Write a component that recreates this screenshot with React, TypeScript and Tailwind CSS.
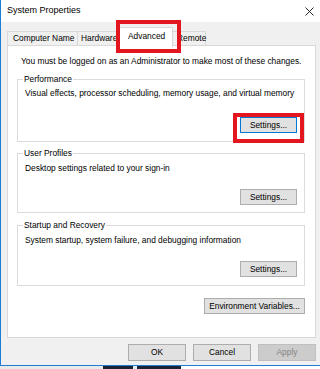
import React from 'react';

const font = { fontFamily: '"Liberation Sans", Arial, sans-serif' };

const Btn = ({ label, focused = false, disabled = false, className = '' }: { label: string; focused?: boolean; disabled?: boolean; className?: string }) => (
  <div
    className={`flex items-center justify-center border text-[8.4px] leading-none ${
      disabled
        ? 'bg-[#cccccc] border-[#bfbfbf] text-[#838383]'
        : focused
          ? 'bg-[#e1e1e1] border-[#0078d7] text-black'
          : 'bg-[#e1e1e1] border-[#adadad] text-black'
    } ${className}`}
  >
    {label}
  </div>
);

export default function App() {
  return (
    <div className="relative w-[320px] h-[369px] bg-white overflow-hidden" style={font}>
      <div className="h-[366px] border-l border-b border-[#1a7fd4] bg-[#f0f0f0] flex flex-col">
        {/* title bar */}
        <div className="h-[22px] bg-white flex items-center justify-between pl-[6px] pr-[6px]">
          <span className="text-[9px] text-black">System Properties</span>
          <svg width="9" height="9" viewBox="0 0 9 9">
            <path d="M0.5 0.5 L8.5 8.5 M8.5 0.5 L0.5 8.5" stroke="#111" strokeWidth="0.9" />
          </svg>
        </div>

        <div className="flex-1 pl-[6px] pr-[4px] flex flex-col">
          {/* tabs */}
          <div className="h-[23px] flex items-end text-[8.4px] text-black">
            <div className="w-[71px] h-[14px] border border-b-0 border-[#d9d9d9] bg-[#f0f0f0] pl-[5px] leading-[13px]">Computer Name</div>
            <div className="w-[43px] h-[14px] -ml-px border border-b-0 border-[#d9d9d9] bg-[#f0f0f0] pl-[3px] leading-[13px]">Hardware</div>
            <div className="relative z-10 w-[56px] h-[20px] -ml-[3px] -mb-[2px] border border-b-0 border-[#d9d9d9] bg-white pl-[10px] leading-[17px]">Advanced</div>
            <div className="w-[36px] h-[14px] -ml-[3px] border border-b-0 border-[#d9d9d9] bg-[#f0f0f0] pl-[6px] leading-[13px]">Remote</div>
          </div>

          {/* panel */}
          <div className="h-[293px] border border-[#d9d9d9] bg-white pt-[10px] pl-[9px] pr-[10px] flex flex-col text-[8.4px] leading-[11px] text-black">
            <div className="ml-[4px] whitespace-nowrap">You must be logged on as an Administrator to make most of these changes.</div>

            <fieldset className="mt-[7px] border border-[#dcdcdc] pl-[5px] pr-[7px] pb-[8px]">
              <legend className="px-[1px]">Performance</legend>
              <div className="ml-[2px] mt-[3px] whitespace-nowrap">Visual effects, processor scheduling, memory usage, and virtual memory</div>
              <div className="flex justify-end mt-[18px]">
                <Btn label="Settings..." focused className="w-[57px] h-[16px]" />
              </div>
            </fieldset>

            <fieldset className="mt-[6px] border border-[#dcdcdc] pl-[5px] pr-[7px] pb-[7px]">
              <legend className="px-[1px]">User Profiles</legend>
              <div className="ml-[2px] mt-[4px]">Desktop settings related to your sign-in</div>
              <div className="flex justify-end mt-[15px]">
                <Btn label="Settings..." className="w-[57px] h-[16px]" />
              </div>
            </fieldset>

            <fieldset className="mt-[7px] border border-[#dcdcdc] pl-[5px] pr-[7px] pb-[8px]">
              <legend className="px-[1px]">Startup and Recovery</legend>
              <div className="ml-[2px] mt-[4px]">System startup, system failure, and debugging information</div>
              <div className="flex justify-end mt-[15px]">
                <Btn label="Settings..." className="w-[57px] h-[16px]" />
              </div>
            </fieldset>

            <div className="flex justify-end mt-[12px]">
              <Btn label="Environment Variables..." className="w-[101px] h-[16px]" />
            </div>
          </div>

          {/* dialog buttons */}
          <div className="mt-[6px] flex justify-end gap-[7px]">
            <Btn label="OK" className="w-[58px] h-[17px]" />
            <Btn label="Cancel" className="w-[58px] h-[17px]" />
            <Btn label="Apply" disabled className="w-[58px] h-[17px]" />
          </div>
        </div>
      </div>

      {/* desktop strip below the window */}
      <div className="h-[3px] flex">
        <div className="w-[103px] bg-[#e9e9e9]" />
        <div className="w-[30px] bg-[#1c2233]" />
        <div className="w-[4px] bg-[#e9e9e9]" />
        <div className="w-[44px] bg-[#1c2233]" />
        <div className="flex-1 bg-white" />
      </div>

      {/* red annotation boxes */}
      <div className="absolute left-[116px] top-[20px] w-[65px] h-[33px] border-[4px] border-[#e3151f] z-20" />
      <div className="absolute left-[233px] top-[113px] w-[71px] h-[30px] border-[4px] border-[#e3151f] z-20" />
    </div>
  );
}
